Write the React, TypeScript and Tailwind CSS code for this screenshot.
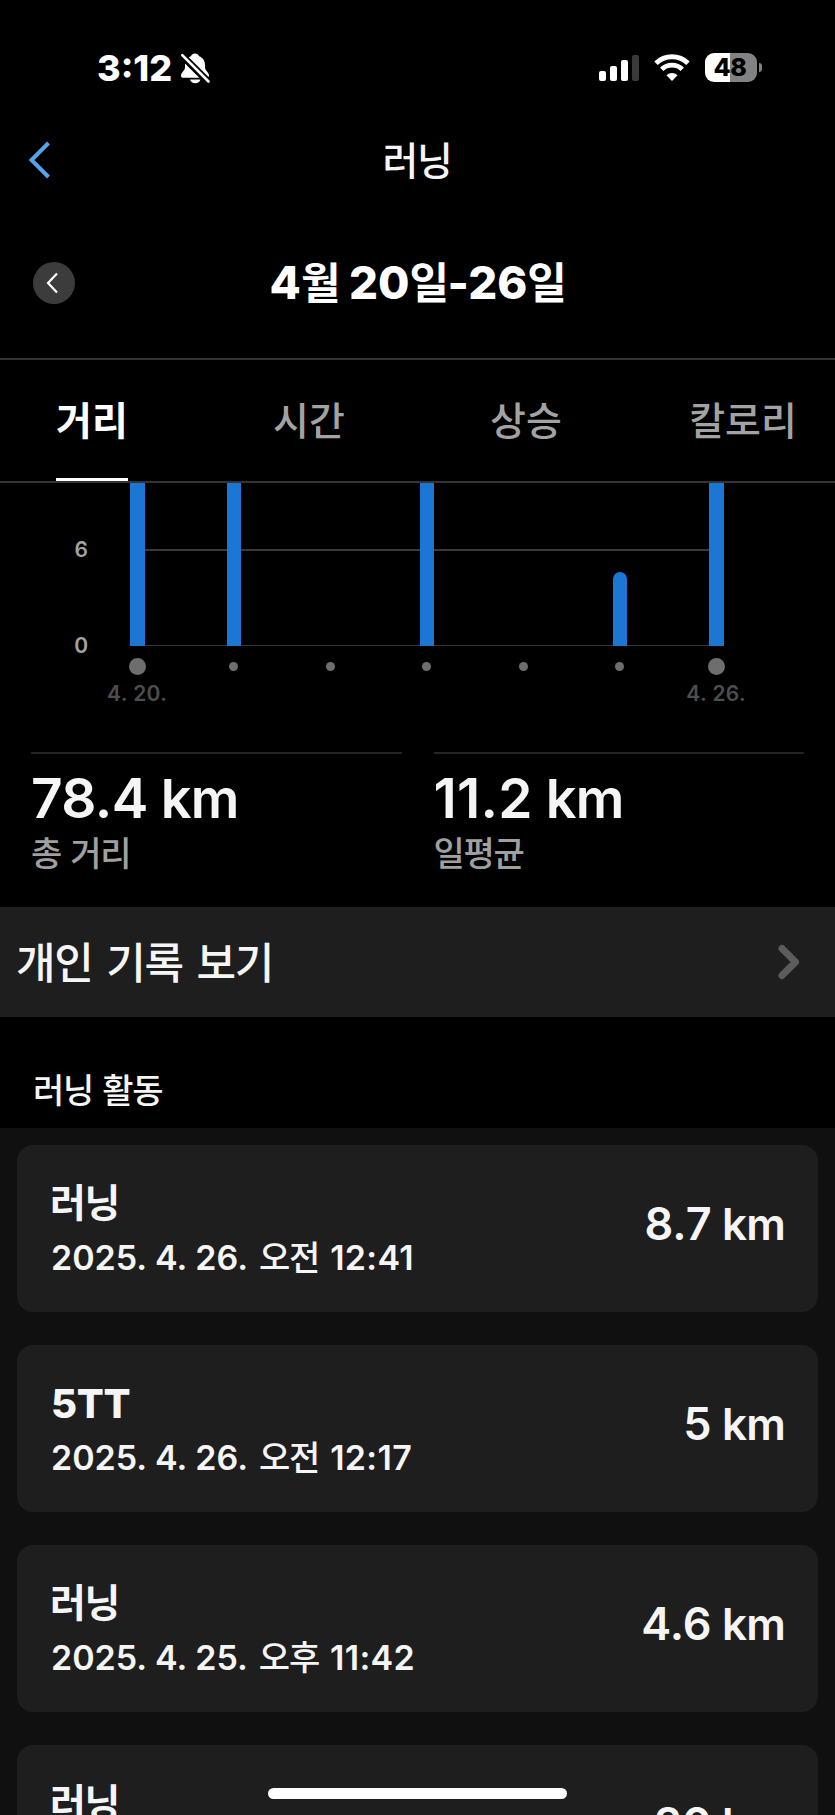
import React from "react";

const ko = "font-['Noto_Sans_CJK_KR',sans-serif]";

const bars = [
  { tall: true, edge: true, label: "4. 20." },
  { tall: true },
  {},
  { tall: true },
  {},
  { short: true },
  { tall: true, edge: true, label: "4. 26." },
] as { tall?: boolean; short?: boolean; edge?: boolean; label?: string }[];

const activities = [
  { name: "러닝", date: "2025. 4. 26.", part: "오전", time: "12:41", km: "8.7" },
  { name: "5TT", date: "2025. 4. 26.", part: "오전", time: "12:17", km: "5" },
  { name: "러닝", date: "2025. 4. 25.", part: "오후", time: "11:42", km: "4.6" },
  { name: "러닝", date: "2025. 4. 24.", part: "오후", time: "11:30", km: "20" },
];

function StatusBar() {
  return (
    <div className="flex h-[104px] shrink-0 items-start pl-[97px] pr-[73px] pt-[48px] text-white">
      <div className="w-[75px] whitespace-nowrap text-[36px] font-extrabold leading-[40px]">3:12</div>
      <svg className="ml-[8px] mt-[4px]" width="31" height="32" viewBox="0 0 31 32" fill="#fff">
        <path d="M15 1.500c-2 0-3.600 1.200-4.100 2.800C7 5.700 5 9 5 13v2.500c0 3-4 5.200-4 8C1 25 2 25.800 3.500 25.800h23c1.500 0 2.500-.8 2.500-2.300 0-2.800-4-5-4-8V13c0-4-2-7.300-5.900-8.700C18.600 2.700 17 1.500 15 1.500Z" />
        <path d="M10 27.500h10.500c-.6 2.300-2.600 3.700-5.200 3.700s-4.700-1.400-5.300-3.700Z" />
        <path d="M1.500 3 28.500 30" stroke="#000" strokeWidth="7" />
        <path d="M2.300 3.200 28.500 29.500" stroke="#fff" strokeWidth="2.600" strokeLinecap="round" />
      </svg>
      <div className="ml-auto flex h-[40px]">
        <div className="mt-[7px] flex h-[26px] items-end gap-[4px]">
          <div className="h-[10px] w-[7px] rounded-[2px] bg-white" />
          <div className="h-[15px] w-[7px] rounded-[2px] bg-white" />
          <div className="h-[21px] w-[7px] rounded-[2px] bg-white" />
          <div className="h-[26px] w-[7px] rounded-[2px] bg-[#3a3a3a]" />
        </div>
        <svg className="ml-[15px] mt-[5px]" width="36" height="29" viewBox="0 0 36 29" fill="none" stroke="#fff">
          <path d="M2 10.300A23 23 0 0 1 34 10.300" strokeWidth="5" />
          <path d="M7.700 16.300A15 15 0 0 1 28.300 16.300" strokeWidth="4.800" />
          <path d="M18 28 12.500 22.300a8 8 0 0 1 11 0Z" fill="#fff" stroke="none" />
        </svg>
        <div className="ml-[15px] mt-[5px] flex h-[29px] w-[52px] items-center justify-center rounded-[9px] bg-[linear-gradient(90deg,#fff_48%,#828282_48%)] pr-[2px] text-[25px] font-extrabold leading-[29px] tracking-[-0.5px] text-black">
          48
        </div>
        <div className="ml-[2px] mt-[15px] h-[9px] w-[3px] rounded-r-full bg-[#828282]" />
      </div>
    </div>
  );
}

function Stat({ value, label, tight }: { value: string; label: string; tight?: boolean }) {
  return (
    <div className="flex-1 border-t-2 border-[#242424]">
      <div className="whitespace-pre pt-[10px] text-[55px] font-semibold leading-[68px]">
        <span className={tight ? "tracking-[0.2px]" : "tracking-[-0.6px]"}>{value}</span>
        <span className="text-[54px] leading-none tracking-[-0.600px]"> km</span>
      </div>
      <div className={`${ko} text-[34px] font-medium leading-[40px] tracking-[-1.300px] text-[#a0a0a0] [word-spacing:3px]`}>{label}</div>
    </div>
  );
}

export default function App() {
  return (
    <div className="relative flex h-[1815px] w-[835px] flex-col overflow-hidden bg-black font-[Inter,'Noto_Sans_CJK_KR',sans-serif] text-[#f5f5f5]">
      <StatusBar />

      <header className="grid h-[111px] shrink-0 grid-cols-3 items-center px-[28px]">
        <svg width="24" height="38" viewBox="0 0 24 38" fill="none" stroke="#57a0ea" strokeWidth="4">
          <path d="M20.500 2 3.500 19 20.500 36" />
        </svg>
        <h1 className={`${ko} pb-[4px] pr-[1px] text-center text-[39px] font-medium leading-[50px] tracking-[-1.500px]`}>러닝</h1>
      </header>

      <div className="grid h-[143px] shrink-0 grid-cols-[42px_1fr_42px] items-center px-[33px] pb-[7px]">
        <button className="flex h-[42px] w-[42px] items-center justify-center rounded-full bg-[#3c3c3c]">
          <svg width="14" height="22" viewBox="0 0 14 22" fill="none" stroke="#fff" strokeWidth="2.200" className="-ml-1">
            <path d="M12 1.500 3 11 12 20.500" />
          </svg>
        </button>
        <h2 className="whitespace-nowrap text-center text-[45.500px] font-extrabold leading-[60px] text-white">
          4<span className={`${ko} text-[43px] font-bold leading-none tracking-[-1.500px]`}>월</span> 20
          <span className={`${ko} text-[43px] font-bold leading-none tracking-[-1.500px]`}>일</span>-26
          <span className={`${ko} text-[43px] font-bold leading-none tracking-[-1.500px]`}>일</span>
        </h2>
      </div>

      <nav className={`${ko} flex h-[125px] shrink-0 justify-center overflow-hidden border-y-2 border-[#333] text-[39px] font-medium text-[#a3a3a3]`}>
        <div className="flex w-[217px] shrink-0 justify-center">
          <div className="flex items-center border-b-3 border-white pb-[2px] font-bold text-white">거리</div>
        </div>
        <div className="flex w-[217px] shrink-0 items-center justify-center pb-[5px]">시간</div>
        <div className="flex w-[217px] shrink-0 items-center justify-center pb-[5px]">상승</div>
        <div className="flex w-[217px] shrink-0 items-center justify-center pb-[5px]">칼로리</div>
      </nav>

      <section className="flex h-[269px] shrink-0">
        <div className="flex w-[89px] flex-col items-end pr-px pt-[52px] text-[21px] font-semibold leading-[30px] text-[#a3a3a3]">
          <span>6</span>
          <span className="mt-[66px]">0</span>
        </div>
        <div className="relative">
          <div className="absolute left-[48px] top-[66px] h-[2px] w-[579px] bg-[#3a3a3a]" />
          <div className="absolute left-[48px] top-[162px] h-px w-[579px] bg-[#333]" />
          <div className="relative flex">
            {bars.map((b, i) => (
              <div key={i} className="flex w-[96.500px] flex-col items-center">
                <div className="flex h-[163px] items-end">
                  {b.tall && <div className="h-full w-[14.500px] bg-[#1b77d3]" />}
                  {b.short && <div className="h-[74px] w-[14px] rounded-t-full bg-[#1b77d3]" />}
                </div>
                <div className="flex h-[41px] items-center">
                  <div className={b.edge ? "h-[17px] w-[17px] rounded-full bg-[#6e6e6e]" : "h-[9px] w-[9px] rounded-full bg-[#6e6e6e]"} />
                </div>
                <div className="-mt-[8px] whitespace-nowrap text-[21px] font-semibold leading-[30px] tracking-[0.4px] text-[#4d4d4d]">{b.label}</div>
              </div>
            ))}
          </div>
        </div>
      </section>

      <section className="flex h-[155px] shrink-0 gap-[32px] px-[31px]">
        <Stat value="78.4" label="총 거리" />
        <Stat value="11.2" label="일평균" tight />
      </section>

      <button className="flex h-[110px] shrink-0 items-center justify-between bg-[#1e1e1e] pl-[16px] pr-[32px]">
        <span className={`${ko} pb-[5px] text-[43px] font-medium leading-[60px] tracking-[-1.200px] [word-spacing:5px]`}>개인 기록 보기</span>
        <svg width="26" height="38" viewBox="0 0 26 38" fill="none" stroke="#5c5c5e" strokeWidth="7" strokeLinecap="round" strokeLinejoin="round">
          <path d="M5 5.500 18.500 19 5 32.500" />
        </svg>
      </button>

      <h3 className={`${ko} h-[111px] shrink-0 pl-[33px] pt-[50px] text-[34px] font-medium leading-[44px] tracking-[-1.300px] [word-spacing:3px]`}>러닝 활동</h3>

      <main className="flex flex-col gap-[33px] bg-[#101010] px-[17px] pt-[17px]">
        {activities.map((a, i) => (
          <article key={i} className="flex h-[167px] shrink-0 items-center justify-between rounded-[16px] bg-[#1e1e1e] pl-[33px] pr-[33px]">
            <div className="flex flex-col">
              {a.name === "5TT" ? (
                <div className="h-[56px] pl-px text-[40px] font-extrabold leading-[55px] tracking-[-0.3px]">{a.name}</div>
              ) : (
                <div className={`${ko} h-[56px] text-[39px] font-bold leading-[49px] tracking-[-1.500px]`}>{a.name}</div>
              )}
              <div className="h-[50px] whitespace-pre pl-px text-[34px] font-semibold leading-[52px]">
                <span>{a.date}</span>
                <span className={`${ko} ml-[11px] mr-[11px] text-[34px] font-medium leading-none tracking-[-1.200px]`}>{a.part}</span>
                <span className="tracking-[0.300px]">{a.time}</span>
              </div>
            </div>
            <div className="whitespace-pre pb-[9px] text-[45px] font-semibold leading-[56px]">
              {a.km}
              <span className="text-[44px] leading-none tracking-[-0.800px]"> km</span>
            </div>
          </article>
        ))}
      </main>

      <div className="absolute bottom-[16px] left-[268px] h-[11px] w-[299px] rounded-full bg-white" />
    </div>
  );
}
